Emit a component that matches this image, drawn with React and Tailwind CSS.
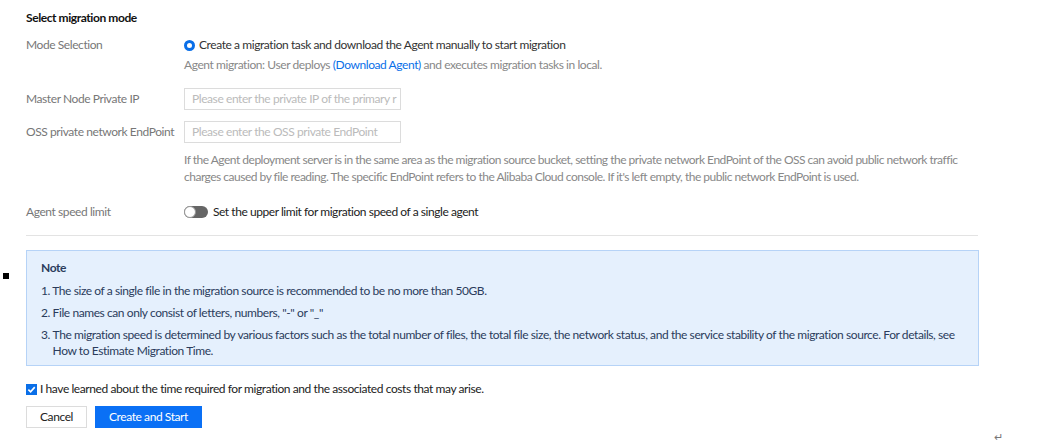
export default function App() {
  const font = { fontFamily: 'Lato, "Open Sans", sans-serif' };
  return (
    <div className="relative w-[1053px] h-[444px] bg-white text-[12px] text-[#333] tracking-[-0.42px]" style={font}>
      <div className="absolute left-[3px] top-[273px] w-[6px] h-[6px] bg-black" />
      <div className="absolute left-[994px] top-[429px] text-[11px] text-[#777]">↵</div>
      <div className="pl-[26px] pr-[74px] pt-[10px]">
        <div className="font-bold text-[#111] leading-[16px]">Select migration mode</div>
        <div className="flex mt-[10px]">
          <div className="w-[158px] text-[#777] leading-[18px] whitespace-nowrap">Mode Selection</div>
          <div>
            <div className="flex items-center gap-[4px] leading-[18px]">
              <span className="w-[11px] h-[11px] rounded-full border-[3px] border-[#0a6fe8] bg-white" />
              <span>Create a migration task and download the Agent manually to start migration</span>
            </div>
            <div className="mt-[2px] text-[#888] leading-[18px]">
              Agent migration: User deploys <span className="text-[#0a6fe8]">(Download Agent)</span> and executes migration tasks in local.
            </div>
          </div>
        </div>
        <div className="flex items-center mt-[14px]">
          <div className="w-[158px] text-[#777] whitespace-nowrap">Master Node Private IP</div>
          <div className="w-[217px] h-[22px] border border-[#dcdcdc] px-[7px] flex items-center text-[#bbb] overflow-hidden whitespace-nowrap">Please enter the private IP of the primary r</div>
        </div>
        <div className="flex items-center mt-[11px]">
          <div className="w-[158px] text-[#777] whitespace-nowrap">OSS private network EndPoint</div>
          <div className="w-[217px] h-[22px] border border-[#dcdcdc] px-[7px] flex items-center text-[#bbb] overflow-hidden whitespace-nowrap">Please enter the OSS private EndPoint</div>
        </div>
        <div className="ml-[158px] mt-[8px] text-[#888] leading-[17px] tracking-[-0.5px] w-[800px]">
          If the Agent deployment server is in the same area as the migration source bucket, setting the private network EndPoint of the OSS can avoid public network traffic charges caused by file reading. The specific EndPoint refers to the Alibaba Cloud console. If it's left empty, the public network EndPoint is used.
        </div>
        <div className="flex items-center mt-[18px]">
          <div className="w-[158px] text-[#777] whitespace-nowrap">Agent speed limit</div>
          <div className="flex items-center gap-[5px]">
            <span className="relative w-[24px] h-[12px] rounded-full bg-[#666]">
              <span className="absolute left-0 top-0 w-[12px] h-[12px] rounded-full bg-white border border-[#999]" />
            </span>
            <span className="text-[#222] tracking-[-0.45px]">Set the upper limit for migration speed of a single agent</span>
          </div>
        </div>
        <div className="mt-[14px] h-px bg-[#e3e3e3] w-[952px]" />
        <div className="mt-[14px] w-[953px] h-[116px] bg-[#e5f0fd] border border-[#b6d3f7] px-[14px] pt-[9px] text-[#2b3c5c]">
          <div className="font-bold leading-[16px]">Note</div>
          <div className="mt-[7px] leading-[16px]">1. The size of a single file in the migration source is recommended to be no more than 50GB.</div>
          <div className="mt-[6px] leading-[16px]">2. File names can only consist of letters, numbers, "-" or "_"</div>
          <div className="mt-[6px] leading-[16px] flex">
            <span>3.&nbsp;</span>
            <span className="w-[912px]">The migration speed is determined by various factors such as the total number of files, the total file size, the network status, and the service stability of the migration source. For details, see How to Estimate Migration Time.</span>
          </div>
        </div>
        <div className="flex items-center gap-[3px] mt-[14px]">
          <span className="w-[11px] h-[11px] bg-[#0a6fe8] flex items-center justify-center">
            <svg width="9" height="9" viewBox="0 0 10 10"><path d="M1.5 5.2 L4 7.6 L8.6 2.4" stroke="white" strokeWidth="1.8" fill="none" /></svg>
          </span>
          <span className="text-[#222]">I have learned about the time required for migration and the associated costs that may arise.</span>
        </div>
        <div className="flex gap-[8px] mt-[8px]">
          <div className="w-[61px] h-[22px] border border-[#dcdcdc] flex items-center justify-center text-[#222]">Cancel</div>
          <div className="w-[107px] h-[22px] bg-[#0a70f5] flex items-center justify-center text-white">Create and Start</div>
        </div>
      </div>
    </div>
  );
}
